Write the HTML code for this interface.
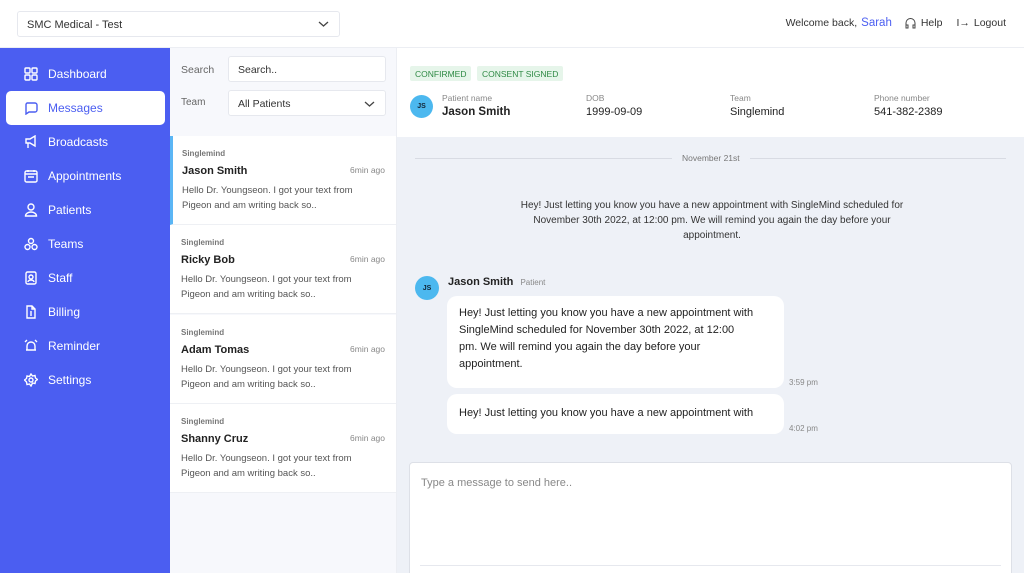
<!DOCTYPE html>
<html><head><meta charset="utf-8"><style>
*{box-sizing:border-box;margin:0;padding:0}
html,body{width:1024px;height:573px;overflow:hidden}
body{font-family:"Liberation Sans",sans-serif;background:#fff;position:relative;color:#222}
.abs{position:absolute}
.top{left:0;top:0;width:1024px;height:48px;border-bottom:1px solid #eceef3;background:#fff}
.sel{left:17px;top:11px;width:323px;height:26px;border:1px solid #e6e8ee;border-radius:3px;font-size:11px;padding:7px 9px;color:#333}
.side{left:0;top:48px;width:170px;height:525px;background:#4b5ef1}
.nav{position:absolute;left:0;width:170px;height:34px;color:#fff;font-size:12px;display:flex;align-items:center;padding-left:24px}
.nav svg{width:14px;height:14px;margin-right:10px;stroke:#fff;fill:none;stroke-width:1.4}
.nav.on{left:6px;width:159px;background:#fff;color:#4b5ef1;border-radius:5px;padding-left:18px}
.nav.on svg{stroke:#4b5ef1}
.list{left:170px;top:48px;width:227px;height:525px;background:#f7f8fc;border-right:1px solid #eceef3}
.inp{position:absolute;left:58px;width:158px;height:26px;background:#fff;border:1px solid #e6e8ee;border-radius:3px;font-size:10.5px;padding:7px 9px;color:#333}
.lbl{position:absolute;left:11px;font-size:10.5px;color:#666}
.item{position:absolute;left:0;width:226px;height:89px;background:#fff;border-bottom:1px solid #eef0f4;padding:13px 11px}
.item .g{font-size:8px;font-weight:bold;color:#777}
.item .n{font-size:11px;font-weight:bold;color:#222;margin-top:7px;display:flex;justify-content:space-between}
.item .n span{font-size:8.5px;font-weight:normal;color:#888}
.item .m{font-size:9.5px;color:#555;line-height:15px;margin-top:6px;white-space:nowrap}
.hdr{left:397px;top:48px;width:627px;height:89px;background:#fff}
.tag{position:absolute;top:18px;height:15px;background:#e6f5ea;color:#2f8a45;font-size:8.5px;padding:3px 5px;border-radius:2px}
.av{position:absolute;width:23px;height:23px;border-radius:50%;background:#4cb8ef;color:#123;font-size:7px;font-weight:bold;display:flex;align-items:center;justify-content:center}
.fl{position:absolute;top:45px;font-size:8.5px;color:#888}
.fl b{display:block;font-size:11px;color:#222;margin-top:3px;font-weight:normal}
.chat{left:397px;top:137px;width:627px;height:436px;background:#eef1f7;overflow:hidden}
.bub{position:absolute;left:50px;width:337px;background:#fff;border-radius:10px;font-size:11px;line-height:17px;color:#222;padding:9px 12px;white-space:nowrap}
.t{position:absolute;left:392px;font-size:8px;color:#888}
</style></head><body>
<div class="abs top"></div>
<div class="abs sel">SMC Medical - Test<svg class="abs" style="right:10px;top:8px" width="11" height="8" viewBox="0 0 11 8"><path d="M1 2l4.5 4 4.5-4" stroke="#444" fill="none" stroke-width="1.3"/></svg></div>
<div class="abs" style="right:18px;top:17px;font-size:10.5px;color:#333;display:flex;align-items:center;gap:4px">Welcome back, <span style="color:#4b5ef1;font-size:11.5px;margin-right:8px">Sarah</span>
<svg width="13" height="12" viewBox="0 0 13 12"><path d="M2 9V6a4.5 4.5 0 0 1 9 0v3M2 8h2v3H2zM9 8h2v3H9z" stroke="#444" fill="none" stroke-width="1"/></svg>Help<span style="margin-left:10px">I→</span> Logout</div>

<div class="abs side">
<div class="nav" style="top:9px"><svg viewBox="0 0 14 14"><rect x="1" y="1" width="5" height="5" rx="1"/><rect x="8" y="1" width="5" height="5" rx="1"/><rect x="1" y="8" width="5" height="5" rx="1"/><rect x="8" y="8" width="5" height="5" rx="1"/></svg>Dashboard</div>
<div class="nav on" style="top:43px"><svg viewBox="0 0 14 14"><path d="M3 2h8a2 2 0 0 1 2 2v5a2 2 0 0 1-2 2H5l-3 2V4a2 2 0 0 1 1-2z"/></svg>Messages</div>
<div class="nav" style="top:77px"><svg viewBox="0 0 14 14"><path d="M2 4h4l5-3v10L6 8H2zM4 8v5"/></svg>Broadcasts</div>
<div class="nav" style="top:111px"><svg viewBox="0 0 14 14"><rect x="1" y="2" width="12" height="11" rx="1.5"/><path d="M1 5h12M4 1v2M10 1v2M4 8h6"/></svg>Appointments</div>
<div class="nav" style="top:145px"><svg viewBox="0 0 14 14"><circle cx="7" cy="4" r="3"/><path d="M1.5 13a5.5 4 0 0 1 11 0z"/></svg>Patients</div>
<div class="nav" style="top:179px"><svg viewBox="0 0 14 14"><circle cx="7" cy="4" r="2.5"/><circle cx="3.5" cy="10" r="2.5"/><circle cx="10.5" cy="10" r="2.5"/></svg>Teams</div>
<div class="nav" style="top:213px"><svg viewBox="0 0 14 14"><rect x="2" y="1" width="10" height="12" rx="1.5"/><circle cx="7" cy="6" r="2"/><path d="M4 11a3 2 0 0 1 6 0"/></svg>Staff</div>
<div class="nav" style="top:247px"><svg viewBox="0 0 14 14"><path d="M3 1h5l3 3v9H3zM8 1v3h3M7 6v5"/></svg>Billing</div>
<div class="nav" style="top:281px"><svg viewBox="0 0 14 14"><path d="M3 11V7a4 4 0 0 1 8 0v4zM2 11h10M1 3l2-2M13 3l-2-2"/></svg>Reminder</div>
<div class="nav" style="top:315px"><svg viewBox="0 0 14 14"><circle cx="7" cy="7" r="2"/><path d="M7 1l1.5 2 2.5-.5.5 2.5 2 1.5-2 1.5-.5 2.5-2.5-.5L7 13l-1.5-2-2.5.5L2.5 9 .5 7l2-1.5L3 3l2.5.5z"/></svg>Settings</div>
</div>

<div class="abs list">
<div class="lbl" style="top:16px">Search</div><div class="inp" style="top:8px">Search..</div>
<div class="lbl" style="top:49px;font-size:10px">Team</div><div class="inp" style="top:42px">All Patients<svg class="abs" style="right:10px;top:9px" width="11" height="8" viewBox="0 0 11 8"><path d="M1 2l4.5 4 4.5-4" stroke="#444" fill="none" stroke-width="1.3"/></svg></div>
<div class="item" style="top:88px;border-left:3px solid #5bb6f5;padding-left:9px"><div class="g">Singlemind</div><div class="n">Jason Smith<span>6min ago</span></div><div class="m">Hello Dr. Youngseon. I got your text from<br>Pigeon and am writing back so..</div></div>
<div class="item" style="top:177px"><div class="g">Singlemind</div><div class="n">Ricky Bob<span>6min ago</span></div><div class="m">Hello Dr. Youngseon. I got your text from<br>Pigeon and am writing back so..</div></div>
<div class="item" style="top:267px"><div class="g">Singlemind</div><div class="n">Adam Tomas<span>6min ago</span></div><div class="m">Hello Dr. Youngseon. I got your text from<br>Pigeon and am writing back so..</div></div>
<div class="item" style="top:356px"><div class="g">Singlemind</div><div class="n">Shanny Cruz<span>6min ago</span></div><div class="m">Hello Dr. Youngseon. I got your text from<br>Pigeon and am writing back so..</div></div>
</div>

<div class="abs hdr">
<div class="tag" style="left:13px">CONFIRMED</div><div class="tag" style="left:80px">CONSENT SIGNED</div>
<div class="av" style="left:13px;top:47px">JS</div>
<div class="fl" style="left:45px">Patient name<b style="font-weight:bold;font-size:11.5px">Jason Smith</b></div>
<div class="fl" style="left:189px">DOB<b>1999-09-09</b></div>
<div class="fl" style="left:333px">Team<b>Singlemind</b></div>
<div class="fl" style="left:477px">Phone number<b>541-382-2389</b></div>
</div>

<div class="abs chat">
<div class="abs" style="left:18px;right:18px;top:21px;border-top:1px solid #d8dbe3"></div>
<div class="abs" style="left:275px;top:16px;background:#eef1f7;padding:0 10px;font-size:8.5px;color:#777">November 21st</div>
<div class="abs" style="left:100px;width:430px;top:61px;text-align:center;font-size:10px;line-height:15px;color:#333;white-space:nowrap">Hey! Just letting you know you have a new appointment with SingleMind scheduled for<br>November 30th 2022, at 12:00 pm. We will remind you again the day before your<br>appointment.</div>
<div class="av" style="left:18px;top:139px;width:24px;height:24px">JS</div>
<div class="abs" style="left:51px;top:139px;font-size:11px;font-weight:bold">Jason Smith <span style="font-size:8px;color:#888;font-weight:normal;margin-left:4px">Patient</span></div>
<div class="bub" style="top:159px;height:92px">Hey! Just letting you know you have a new appointment with<br>SingleMind scheduled for November 30th 2022, at 12:00<br>pm. We will remind you again the day before your<br>appointment.</div>
<div class="t" style="top:241px">3:59 pm</div>
<div class="bub" style="top:257px;height:40px;padding-top:11px">Hey! Just letting you know you have a new appointment with</div>
<div class="t" style="top:287px">4:02 pm</div>
<div class="abs" style="left:12px;top:325px;width:603px;height:120px;background:#fff;border:1px solid #dde0e7;border-radius:4px;padding:14px 11px;font-size:11px;color:#888">Type a message to send here..
<div class="abs" style="left:10px;right:10px;top:102px;border-top:1px solid #e6e8ee"></div></div>
</div>
</body></html>
